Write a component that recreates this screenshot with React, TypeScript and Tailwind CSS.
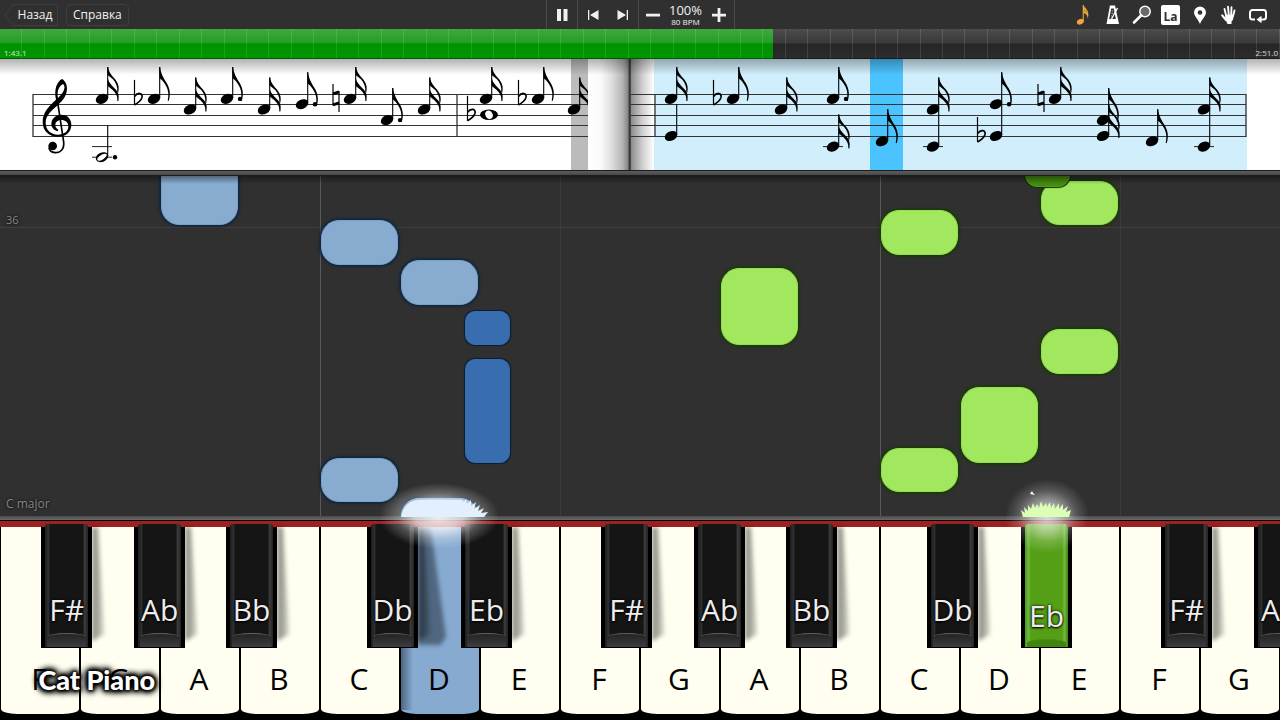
import React, { useState } from 'react';
import { clsx } from 'clsx';

type Duration = 'whole' | 'half' | 'quarter' | 'eighth' | 'sixteenth';

interface ScoreNote {
    x: number;
    step: number; // 0 = bottom staff line, one per line or space
    duration: Duration;
    dotted?: boolean;
    joinStep?: number; // second head on the same stem
}

interface RollNote {
    left: number;
    top: number;
    width: number;
    height: number;
    color: 'blue' | 'darkBlue' | 'green' | 'darkGreen';
}

const WIDTH = 1280;
const TICKS = 57;

const leftNotes: ScoreNote[] = [
    { x: 102, step: 7, duration: 'sixteenth' },
    { x: 102, step: -4, duration: 'half', dotted: true },
    { x: 154, step: 7, duration: 'eighth' },
    { x: 190, step: 5, duration: 'sixteenth' },
    { x: 227, step: 7, duration: 'eighth', dotted: true },
    { x: 264, step: 5, duration: 'sixteenth' },
    { x: 302, step: 6, duration: 'eighth', dotted: true },
    { x: 350, step: 7, duration: 'sixteenth' },
    { x: 387, step: 3, duration: 'eighth', dotted: true },
    { x: 424, step: 5, duration: 'sixteenth' },
    { x: 486, step: 7, duration: 'sixteenth' },
    { x: 489, step: 4, duration: 'whole' },
    { x: 538, step: 7, duration: 'eighth' },
    { x: 574, step: 5, duration: 'sixteenth' },
];

const rightNotes: ScoreNote[] = [
    { x: 671, step: 7, duration: 'sixteenth' },
    { x: 671, step: 0, duration: 'quarter' },
    { x: 733, step: 7, duration: 'eighth' },
    { x: 781, step: 5, duration: 'sixteenth' },
    { x: 833, step: 7, duration: 'eighth', dotted: true },
    { x: 833, step: -2, duration: 'sixteenth' },
    { x: 882, step: -1, duration: 'eighth' },
    { x: 933, step: 5, duration: 'sixteenth', joinStep: -2 },
    { x: 996, step: 6, duration: 'eighth', dotted: true, joinStep: 0 },
    { x: 1055, step: 7, duration: 'sixteenth' },
    { x: 1103, step: 3, duration: 'eighth' },
    { x: 1103, step: 0, duration: 'sixteenth' },
    { x: 1152, step: -1, duration: 'eighth' },
    { x: 1204, step: 5, duration: 'sixteenth', joinStep: -2 },
];

const rollNotes: RollNote[] = [
    { left: 161, top: -20, width: 77, height: 69, color: 'blue' },
    { left: 321, top: 44, width: 77, height: 45, color: 'blue' },
    { left: 401, top: 84, width: 77, height: 45, color: 'blue' },
    { left: 465, top: 135, width: 45, height: 34, color: 'darkBlue' },
    { left: 465, top: 183, width: 45, height: 104, color: 'darkBlue' },
    { left: 321, top: 282, width: 77, height: 44, color: 'blue' },
    { left: 401, top: 322, width: 77, height: 45, color: 'blue' },
    { left: 721, top: 92, width: 77, height: 77, color: 'green' },
    { left: 881, top: 34, width: 77, height: 45, color: 'green' },
    { left: 1041, top: 5, width: 77, height: 44, color: 'green' },
    { left: 1025, top: -30, width: 45, height: 41, color: 'darkGreen' },
    { left: 1041, top: 153, width: 77, height: 45, color: 'green' },
    { left: 961, top: 211, width: 77, height: 76, color: 'green' },
    { left: 881, top: 272, width: 77, height: 44, color: 'green' },
];

const rollColors = {
    blue: 'bg-[#88abd0] border-[#7b9fc6] shadow-[0_0_2px_2px_#14283c] rounded-[18px]',
    darkBlue: 'bg-[#386db0] border-[#3a6cab] shadow-[0_0_1px_1px_#0c1c33] rounded-[10px]',
    green: 'bg-[#a1e85f] border-[#98dc58] shadow-[0_0_2px_2px_#1d3a0a] rounded-[18px]',
    darkGreen: 'bg-[#448b10] border-[#4f9c17] shadow-[0_0_1px_1px_#16300a] rounded-[12px]',
};

const whiteKeys = ['F', 'G', 'A', 'B', 'C', 'D', 'E', 'F', 'G', 'A', 'B', 'C', 'D', 'E', 'F', 'G'];

const blackKeys = [
    { left: 41, label: 'F#' },
    { left: 134, label: 'Ab' },
    { left: 226, label: 'Bb' },
    { left: 367, label: 'Db' },
    { left: 461, label: 'Eb' },
    { left: 601, label: 'F#' },
    { left: 694, label: 'Ab' },
    { left: 786, label: 'Bb' },
    { left: 927, label: 'Db' },
    { left: 1021, label: 'Eb', pressed: true },
    { left: 1161, label: 'F#' },
    { left: 1254, label: 'Ab' },
];

const percent = (px: number) => `${(px / WIDTH) * 100}%`;
const stepY = (step: number) => 77 - step * 5.3;

const Head = ({ x, y }: { x: number; y: number }) => (
    <ellipse cx={x} cy={y} rx="6.5" ry="4.7" transform={`rotate(-24 ${x} ${y})`} />
);

const Note = ({ x, step, duration, dotted, joinStep }: ScoreNote) => {
    const y = stepY(step);
    const top = y - 32;
    const stemX = x + 5.7;
    const lowest = joinStep ?? step;
    const ledgers = [-2, -4].filter((s) => s >= lowest);

    if (duration === 'whole') {
        return (
            <g>
                <ellipse cx={x} cy={y} rx="9" ry="5.2" />
                <ellipse cx={x} cy={y} rx="3.6" ry="4.4" fill="#fff" transform={`rotate(-25 ${x} ${y})`} />
            </g>
        );
    }

    return (
        <g>
            {ledgers.map((s) => (
                <path key={s} d={`M${x - 10} ${stepY(s)}h20`} stroke="#222" strokeWidth="1" />
            ))}
            <Head x={x} y={y} />
            {duration === 'half' && (
                <ellipse cx={x} cy={y} rx="5.4" ry="2.4" fill="#fff" transform={`rotate(-32 ${x} ${y})`} />
            )}
            {joinStep !== undefined && <Head x={x} y={stepY(joinStep)} />}
            <path d={`M${stemX} ${top}V${stepY(lowest) - 1}`} stroke="#000" strokeWidth="1.1" />
            {duration === 'eighth' && (
                <path
                    transform={`translate(${stemX} ${top})`}
                    d="M-.5 0H.5C1 7 4 11 7 16C10.500 22 11 28 9 34L8 33.5C9.200 28 9 23 5.500 17.500C3.500 14 1.500 12 0 11.500Z"
                />
            )}
            {duration === 'sixteenth' && (
                <g transform={`translate(${stemX} ${top})`}>
                    <path d="M-.5 0H.5C1 6 5 9 8 13C11 17 11.8 21 10.4 26L9.6 25C10 20 8.500 16 5.500 12.500L0 8Z" />
                    <path d="M0 11C1 16 5 19 8 22.500C11.300 26 11.300 30 10.700 34H9.600C10 29 8 26 5 23L0 19Z" />
                </g>
            )}
            {dotted && <circle cx={x + 13} cy={y} r="2.2" />}
        </g>
    );
};

const Flat = ({ x, step }: { x: number; step: number }) => (
    <g transform={`translate(${x} ${stepY(step)})`} fill="none" stroke="#000">
        <path d="M-3.500 -19V6" strokeWidth="1.200" />
        <path d="M-3.500 -2.500C0 -7 5 -6 4 -1.500C3.200 1.500 0 4 -3.500 6" strokeWidth="1.700" />
    </g>
);

const Natural = ({ x, step }: { x: number; step: number }) => (
    <g transform={`translate(${x} ${stepY(step)})`} fill="none" stroke="#000">
        <path d="M-3 -15V6.500M3 -8V13" strokeWidth="1.200" />
        <path d="M-3 -5L3 -7M-3 6L3 4" strokeWidth="3" />
    </g>
);

const TrebleClef = () => (
    <g transform="translate(20 -3) scale(.3333)">
        <path
            fillRule="evenodd"
            d="M126 69C112 76 101 98 108 131C88 150 68 168 68 198C68 226 88 242 113 242C138 242 154 228 154 206C154 188 141 176 125 176C107 176 94 188 94 204C94 214 102 223 113 226L115 222C108 217 105 211 106 205C107 197 114 192 124 192C136 192 145 199 145 211C145 227 132 236 114 236C93 236 77 222 77 201C77 179 94 164 113 148C130 133 141 117 141 97C141 84 134 73 126 69ZM129 84C136 89 134 101 127 111C123 117 118 122 114 126C110 108 116 90 129 84Z"
        />
        <path d="M111 126L131 258C134 280 120 291 105 290C95 289 88 284 87 275" fill="none" stroke="#000" strokeWidth="5" />
        <circle cx="98" cy="270" r="13" />
    </g>
);

const Staff = ({ from, to, bars }: { from: number; to: number; bars: number[] }) => (
    <g stroke="#333" strokeWidth="1">
        {[0, 2, 4, 6, 8].map((s) => (
            <path key={s} d={`M${from} ${Math.round(stepY(s)) + 0.5}H${to}`} />
        ))}
        {bars.map((x) => (
            <path key={x} d={`M${x} 35V78`} strokeWidth="1.300" />
        ))}
    </g>
);

const Score = () => (
    <section className="relative flex h-[111px] shrink-0 bg-white">
        <svg className="block h-full min-w-0 flex-[588]" viewBox="0 0 588 111" preserveAspectRatio="xMinYMin slice" aria-label="Score, current page">
            <rect x="571" width="17" height="111" fill="#bbb" />
            <Staff from={33} to={588} bars={[33, 457]} />
            <TrebleClef />
            <Flat x={138} step={7} />
            <Natural x={336} step={7} />
            <Flat x={471} step={4} />
            <Flat x={522} step={7} />
            {leftNotes.map((note, i) => (
                <Note key={i} {...note} />
            ))}
        </svg>
        {/* page fold */}
        <div className="flex-[43] bg-[linear-gradient(to_right,#fff_0%,#fafafa_30%,#dedede_55%,#b5b5b5_80%,#8a8a8a_92%,#333_97%,#555_100%)]" />
        <svg className="block h-full min-w-0 flex-[649]" viewBox="631 0 649 111" preserveAspectRatio="xMinYMin slice" aria-label="Score, next page">
            <defs>
                <linearGradient id="fold">
                    <stop offset="0" stopColor="#8b8b8b" />
                    <stop offset=".5" stopColor="#cfcfcf" />
                    <stop offset="1" stopColor="#fff" />
                </linearGradient>
            </defs>
            <rect x="631" width="23" height="111" fill="url(#fold)" />
            <rect x="654" width="593" height="111" fill="#d1eefc" />
            <rect x="870" width="33" height="111" fill="#4bc3ff" />
            <Staff from={631} to={1246} bars={[655, 1246]} />
            <Flat x={717} step={7} />
            <Flat x={981} step={0} />
            <Natural x={1041} step={7} />
            {rightNotes.map((note, i) => (
                <Note key={i} {...note} />
            ))}
        </svg>
        <div className="pointer-events-none absolute inset-x-0 top-0 h-4 bg-gradient-to-b from-black/30 to-transparent" />
    </section>
);

const iconButton = 'flex h-[29px] w-[29px] items-center justify-center';

const Toolbar = () => {
    const [playing, setPlaying] = useState(true);

    return (
        <header className="grid h-[29px] shrink-0 grid-cols-[1fr_auto_1fr] bg-[#303030] text-[#f0f0f0]">
            <div className="flex items-center gap-2 pl-1">
                <button type="button" className="relative h-[22px] w-[54px] pl-2 text-xs leading-4">
                    <svg className="absolute inset-0 h-full w-full" viewBox="0 0 54 22" fill="none" stroke="#3e3e3e" aria-hidden="true">
                        <path d="M1 11L9 .5H53.500V21.500H9Z" />
                    </svg>
                    <span className="relative">Назад</span>
                </button>
                <button type="button" className="h-[22px] rounded-sm border border-[#3e3e3e] px-[6px] text-xs leading-4">
                    Справка
                </button>
            </div>

            <div className="flex items-stretch">
                <button type="button" aria-label="Pause" onClick={() => setPlaying(!playing)} className="flex w-[31px] items-center justify-center border-l border-[#4a4a4a]">
                    <svg className="h-3 w-3" viewBox="0 0 12 12" fill="currentColor">
                        {playing ? <path d="M1 0h4v12H1zM7.500 0h4v12h-4z" /> : <path d="M1 0l10 6-10 6z" />}
                    </svg>
                </button>
                <div className="flex items-stretch border-x border-[#4a4a4a]">
                    <button type="button" aria-label="Previous" className="flex w-[30px] items-center justify-center">
                        <svg className="h-3 w-3" viewBox="0 0 12 12" fill="currentColor">
                            <path d="M1 1h1.300v10H1zM11.500 1v10L3 6z" />
                        </svg>
                    </button>
                    <button type="button" aria-label="Next" className="flex w-[30px] items-center justify-center">
                        <svg className="h-3 w-3" viewBox="0 0 12 12" fill="currentColor">
                            <path d="M9.700 1H11v10H9.700zM.5 1v10L9 6z" />
                        </svg>
                    </button>
                </div>
                <div className="flex items-center border-r border-[#4a4a4a]">
                    <button type="button" aria-label="Slower" className="flex w-[29px] items-center justify-center">
                        <svg className="h-[14px] w-[14px]" viewBox="0 0 14 14" fill="currentColor">
                            <path d="M0 5.700h14v2.800H0z" />
                        </svg>
                    </button>
                    <div className="flex w-9 flex-col items-center">
                        <span className="text-[13px] leading-[14px]">100%</span>
                        <span className="whitespace-nowrap text-[8px] leading-[9px]">80 BPM</span>
                    </div>
                    <button type="button" aria-label="Faster" className="flex w-[30px] items-center justify-center">
                        <svg className="h-[14px] w-[14px]" viewBox="0 0 14 14" fill="currentColor">
                            <path d="M0 5.700h5.600V0h2.800v5.700H14v2.800H8.400V14H5.600V8.500H0z" />
                        </svg>
                    </button>
                </div>
            </div>

            <div className="flex items-center justify-end pr-2">
                <button type="button" aria-label="Notes" className={iconButton}>
                    <svg className="h-5 w-5" viewBox="0 0 20 20" fill="#eba53c">
                        <ellipse cx="6.300" cy="16.700" rx="3.600" ry="2.700" transform="rotate(-20 6.300 16.700)" />
                        <path d="M8.700 0h1c.3 3 5.600 4.500 4.600 11l-.8 3c.4-3-1-5-3.700-6v8.500H8.700zM9.800 4.500c.8 1.500 2.600 2.200 3.300 3.500-.3-1.500-2-2.500-3.300-3.500z" />
                    </svg>
                </button>
                <button type="button" aria-label="Metronome" className={iconButton}>
                    <svg className="h-5 w-5" viewBox="0 0 20 20">
                        <path d="M7 0.500h5l4 18.500H3.500z" fill="#fff" />
                        <path d="M8.200 3.500h2.600l2 10.500H6.200z" fill="#303030" />
                        <path d="M8.500 14L14.500 3" stroke="#fff" strokeWidth="1.400" />
                        <path d="M8.700 6h1.500M8.500 8.500h1.500M8 11h1" stroke="#ddd" strokeWidth=".8" />
                    </svg>
                </button>
                <button type="button" aria-label="Zoom" className={iconButton}>
                    <svg className="h-5 w-5" viewBox="0 0 20 20">
                        <circle cx="13" cy="6.500" r="5.200" fill="#6a6a6a" stroke="#fff" strokeWidth="1.500" />
                        <path d="M9.300 10.300L2 17.500" stroke="#fff" strokeWidth="2.600" strokeLinecap="round" />
                    </svg>
                </button>
                <button type="button" className={iconButton}>
                    <span className="flex h-5 w-[19px] items-end justify-center rounded-[2px] bg-white text-[12px] font-bold leading-4 text-[#303030]">La</span>
                </button>
                <button type="button" aria-label="Marker" className={iconButton}>
                    <svg className="h-5 w-5" viewBox="0 0 20 20">
                        <path fillRule="evenodd" fill="#fff" d="M10 1.500A6 6 0 0 0 4 7.500C4 11 8 14 10 19C12 14 16 11 16 7.500A6 6 0 0 0 10 1.500ZM10 5.200A2.300 2.300 0 1 1 10 9.800A2.300 2.300 0 0 1 10 5.200Z" />
                    </svg>
                </button>
                <button type="button" aria-label="Hands" className={iconButton}>
                    <svg className="h-5 w-5" viewBox="0 0 20 20" fill="none" stroke="#fff" strokeLinecap="round">
                        <path d="M7 10L5.500 4M9.700 9L9 1.800M12.200 9L12.500 2.300M14 11L15.500 5.500" strokeWidth="1.900" />
                        <path d="M7 15L3.200 10.300" strokeWidth="2.100" />
                        <path d="M6.300 9.500L14.800 9.500C14.600 12 14.500 15 12.500 16.500V19H8.500C8 17 6.800 16 6 14Z" fill="#fff" stroke="none" />
                    </svg>
                </button>
                <button type="button" aria-label="Loop" className={iconButton}>
                    <svg className="h-5 w-5" viewBox="0 0 20 20" fill="none" stroke="#fff" strokeWidth="2">
                        <path d="M7 14.500H4.500A2.500 2.500 0 0 1 2 12V7.500A2.500 2.500 0 0 1 4.500 5H15.500A2.500 2.500 0 0 1 18 7.500V12A2.500 2.500 0 0 1 15.500 14.500H13" />
                        <path d="M8.500 14.500L13.500 10.800V18.200Z" fill="#fff" stroke="none" />
                    </svg>
                </button>
            </div>
        </header>
    );
};

const SeekBar = () => {
    const [position, setPosition] = useState(60.4);

    return (
        <div className="relative h-[30px] shrink-0 bg-[linear-gradient(#4c4c4c,#3a3a3a_47%,#262626_50%,#2c2c2c)] text-[8px] leading-3 text-white/80">
            <div
                className="absolute inset-y-0 left-0 bg-[linear-gradient(#3fa83f,#25a025_44%,#009200_50%,#009600)]"
                style={{ width: `${position}%` }}
            />
            <div className="absolute inset-0 flex opacity-60">
                {Array.from({ length: TICKS }).map((_, i) => (
                    <div key={i} className="flex-1 border-r border-white/20" />
                ))}
            </div>
            <div className="absolute inset-x-0 bottom-0 flex h-3 justify-between pl-1 pr-[2px]">
                <span>1:43.1</span>
                <span>2:51.0</span>
            </div>
            <div className="absolute inset-x-0 bottom-0 h-px bg-black/40" />
            <input
                type="range"
                aria-label="Position"
                min={0}
                max={100}
                step={0.1}
                value={position}
                onChange={(e) => setPosition(Number(e.target.value))}
                className="absolute inset-0 h-full w-full cursor-pointer opacity-0"
            />
        </div>
    );
};

const Roll = () => (
    <section className="relative min-h-[340px] flex-1 overflow-hidden bg-[#303030]">
        {/* octave lines */}
        <div className="absolute inset-0 flex">
            <div className="w-1/4" />
            <div className="w-[18.75%] border-l border-[#5a5a5a]" />
            <div className="w-1/4 border-l border-[#3c3c3c]" />
            <div className="w-[18.75%] border-l border-[#5a5a5a]" />
            <div className="flex-1 border-l border-[#3c3c3c]" />
        </div>
        <div className="absolute inset-x-0 top-[51px] h-px bg-[#404040]" />
        {rollNotes.map((note, i) => (
            <div
                key={i}
                className={clsx('absolute border', rollColors[note.color])}
                style={{ left: percent(note.left), top: note.top, width: percent(note.width), height: note.height }}
            />
        ))}
        <div className="absolute inset-x-0 top-0 h-2 bg-gradient-to-b from-black/40 to-transparent" />
        <span className="absolute left-[6px] top-9 text-[11px] leading-4 text-[#858585] [text-shadow:0_0_3px_#000]">36</span>
        <span className="absolute bottom-1 left-[6px] text-xs leading-4 text-[#858585] [text-shadow:0_0_3px_#000]">C major</span>
    </section>
);

const BlackKey = ({ left, label, pressed }: { left: number; label: string; pressed?: boolean }) => (
    <button
        type="button"
        className="absolute top-[3px] h-[124px] w-[4%] before:absolute before:inset-x-0 before:bottom-0 before:top-[3px] before:bg-black"
        style={{ left: percent(left) }}
    >
        {!pressed && (
            <span className="absolute left-full top-[3px] h-[114px] w-3 blur-[2px]">
                <span className="block h-full w-full bg-gradient-to-r from-black/50 to-black/15 [clip-path:polygon(0_0,50%_0,100%_94%,0_100%)]" />
            </span>
        )}
        <span
            className={clsx(
                'absolute inset-x-1 bottom-px top-0 flex flex-col justify-end overflow-hidden rounded-t-[3px]',
                pressed
                    ? 'bg-[linear-gradient(to_right,#4a9a18,#70b840_8%,#559f16_14%,#559f16_86%,#70b840_92%,#3c8410)]'
                    : 'bg-[linear-gradient(to_right,#1c1c1c,#303030_8%,#151515_12%,#151515_88%,#3c3c3c_92%,#222)]'
            )}
        >
            <span
                className={clsx(
                    'mx-[2px] border-t [border-radius:50%_50%_0_0/4px_4px_0_0]',
                    pressed ? 'h-2 border-[#4b9113] bg-[#3f8510]' : 'h-[14px] border-[#626262] bg-gradient-to-b from-[#242426] to-[#3d3d40]'
                )}
            />
        </span>
        <span
            className={clsx(
                'absolute inset-x-0 text-center text-[30px] leading-10 text-[#ededed] [text-shadow:0_0_3px_#000,0_1px_2px_#000]',
                pressed ? 'top-[72px]' : 'top-[66px]'
            )}
        >
            {label}
        </span>
    </button>
);

const Keyboard = () => (
    <section className="relative flex h-[200px] shrink-0 flex-col border-t border-black bg-black">
        <div className="h-[6px] bg-[#9c2121]" />
        <div className="flex flex-1 pb-[6px]">
            {whiteKeys.map((label, i) => (
                <button
                    key={i}
                    type="button"
                    className={clsx(
                        'relative mx-px flex min-w-0 flex-1 items-end justify-center pb-[15px] pr-[2px] text-[30px] leading-10 text-black [border-radius:0_0_16px_16px/0_0_5px_5px]',
                        i === 5 ? 'bg-[#86aad0]' : 'bg-[#fffef0]'
                    )}
                >
                    {i === 5 && (
                        <>
                            <span className="absolute left-[17px] top-0 h-[118px] w-7 blur-[2px]">
                                <span className="block h-full w-full bg-[#50677f] [clip-path:polygon(0_0,45%_0,100%_93%,80%_100%,0_100%)]" />
                            </span>
                            <span className="absolute bottom-1 left-0 h-[62px] w-3 bg-gradient-to-r from-[#4c6681] to-transparent" />
                        </>
                    )}
                    {label}
                </button>
            ))}
        </div>
        {blackKeys.map((key) => (
            <BlackKey key={key.left} {...key} />
        ))}
        {/* light where a note meets its key */}
        <div className="pointer-events-none absolute -top-[38px] left-[34.300%] h-[66px] w-[120px] -translate-x-1/2 bg-[radial-gradient(closest-side,#ffffffe6_0%,#ffffffb3_40%,#ffffff40_70%,transparent)]" />
        <svg className="pointer-events-none absolute -top-[22px] left-[34.700%] h-[18px] w-[88px] -translate-x-1/2 overflow-visible" viewBox="0 0 88 18" fill="#e2effc">
            <path d="M1 18C3 7 10 1 20 1H62L64 3L66 0L67 5L71 1L71 7L76 3L74 10L80 6L78 12L84 9L81 14L88 13L84 18Z" />
        </svg>
        <div className="pointer-events-none absolute -top-[42px] left-[81.800%] h-[74px] w-[84px] -translate-x-1/2 bg-[radial-gradient(closest-side,#ffffffcc_0%,#ffffff8c_35%,#ffffff2e_70%,transparent)]" />
        <svg className="pointer-events-none absolute -top-[30px] left-[81.700%] h-[26px] w-[50px] -translate-x-1/2 overflow-visible" viewBox="0 0 50 26" fill="#dcffb5">
            <path d="M2 26L0 19L4 22L3 16L7 20L7 14L10 18L12 12L14 17L16 13L18 17L20 10L22 16L25 12L26 16L29 11L30 17L33 12L34 18L38 12L38 18L42 13L42 19L47 15L45 21L50 19L48 26Z" />
            <path d="M9 3L11 0L12 2L14 4Z" fill="#fff" />
        </svg>
        <p className="pointer-events-none absolute bottom-6 left-[3%] font-['Lato'] text-[27px] font-black leading-8 text-white [text-shadow:0_0_3px_#000,0_0_3px_#000,0_0_5px_#000,0_0_5px_#000,0_0_7px_#000,0_0_7px_#000,0_0_9px_#000,0_0_9px_#000]">
            Cat Piano
        </p>
    </section>
);

const App: React.FC = () => {
    return (
        <main className="flex min-h-screen flex-col overflow-hidden bg-[#303030] font-['Open_Sans','Noto_Sans',sans-serif]">
            <Toolbar />
            <SeekBar />
            <Score />
            <div className="h-[6px] shrink-0 border-y border-[#1c1c1c] bg-gradient-to-b from-[#5c5c5c] to-[#484848]" />
            <Roll />
            <div className="h-1 shrink-0 bg-gradient-to-b from-[#4a4a4a] to-[#6a6a6a]" />
            <Keyboard />
        </main>
    );
};

export default App;
